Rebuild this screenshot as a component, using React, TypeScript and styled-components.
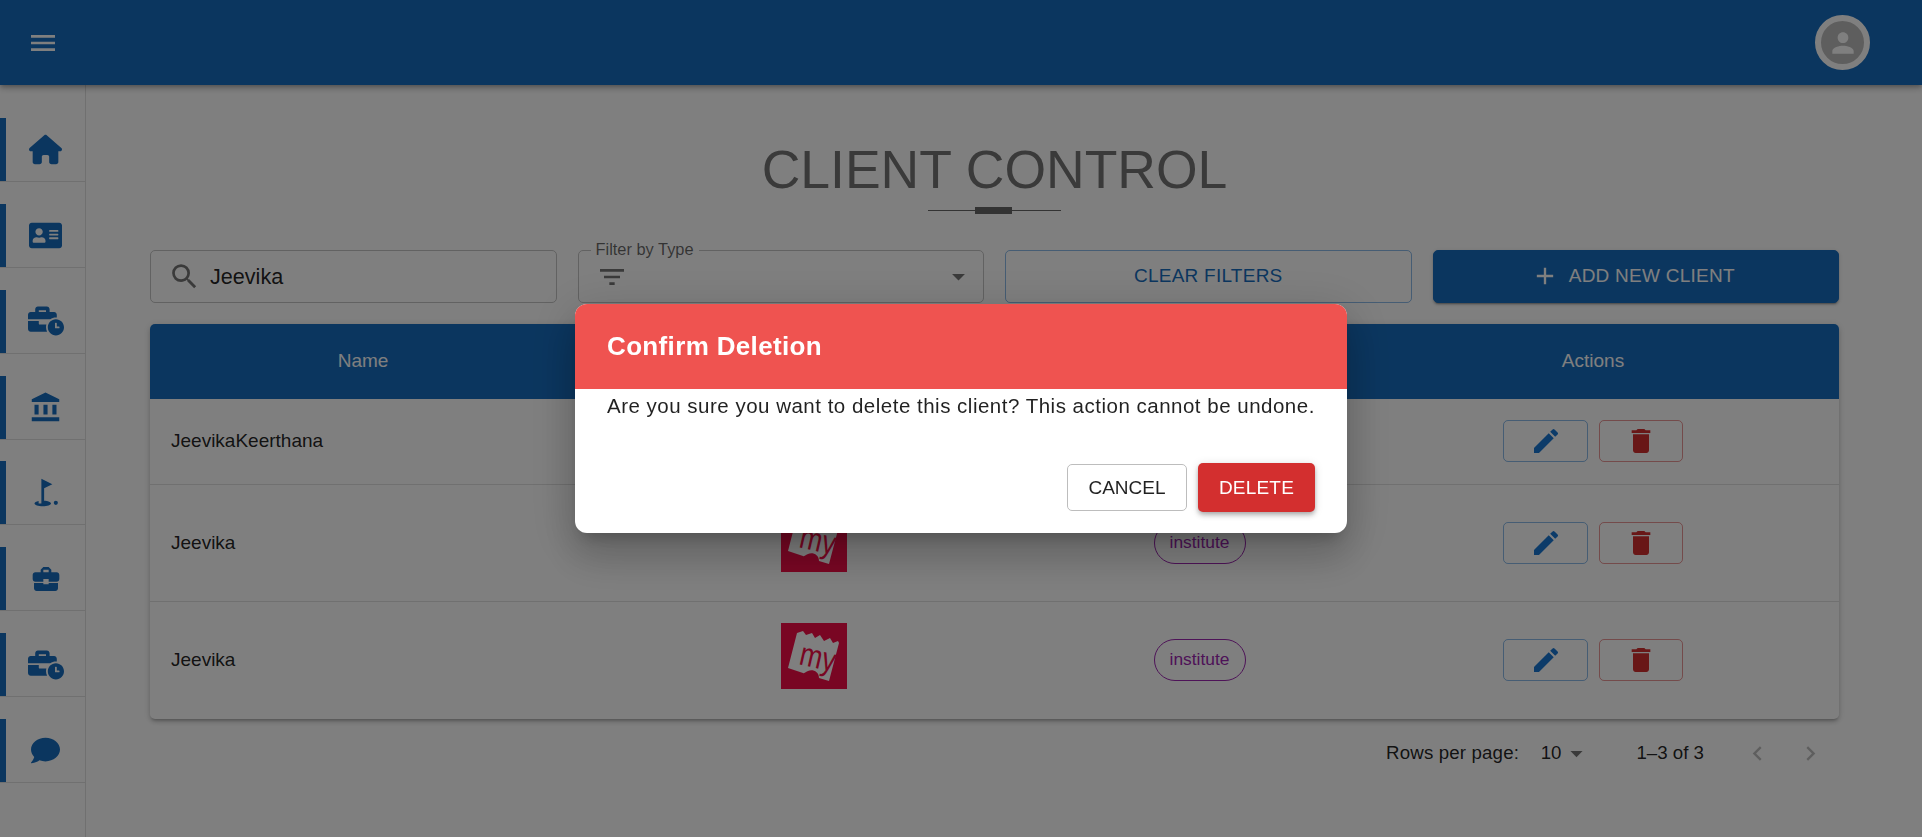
import styled, { createGlobalStyle } from "styled-components";
import { FaAddressCard, FaBusinessTime, FaComment } from "react-icons/fa";
import { FaHouse } from "react-icons/fa6";
import {
  MdAccountBalance,
  MdAdd,
  MdArrowDropDown,
  MdBusinessCenter,
  MdChevronLeft,
  MdChevronRight,
  MdDelete,
  MdEdit,
  MdFilterList,
  MdGolfCourse,
  MdMenu,
  MdPerson,
  MdSearch,
} from "react-icons/md";

const dark = "#176dbf";
const primary = "#1976d2";
const columns = "426px 476px 295px 1fr";

const GlobalStyle = createGlobalStyle`
  * {
    box-sizing: border-box;
  }
  html, body {
    margin: 0;
    height: 100%;
    overflow: hidden;
    background: #fff;
    font-family: "Liberation Sans", Arial, sans-serif;
  }
`;

const Page = styled.div`
  height: 837px;
  display: flex;
  flex-direction: column;
`;

const TopBar = styled.header`
  height: 85px;
  flex-shrink: 0;
  background: ${dark};
  color: #fff;
  display: flex;
  align-items: center;
  justify-content: space-between;
  padding: 0 52px 0 27px;
  box-shadow: 0 2px 4px -1px rgba(0, 0, 0, 0.2), 0 4px 5px rgba(0, 0, 0, 0.14),
    0 1px 10px rgba(0, 0, 0, 0.12);
  position: relative;
  z-index: 2;
`;

const Avatar = styled.div`
  width: 55px;
  height: 55px;
  border-radius: 50%;
  border: 6px solid #fff;
  background: #bdbdbd;
  display: flex;
  align-items: center;
  justify-content: center;
`;

const Body = styled.div`
  flex: 1;
  display: flex;
  min-height: 0;
`;

const Sidebar = styled.nav`
  width: 86px;
  flex-shrink: 0;
  border-right: 1px solid #e0e0e0;
  padding-top: 33px;
  display: flex;
  flex-direction: column;
  gap: 21.86px;
`;

const NavItem = styled.div`
  height: 64px;
  padding-left: 6px;
  border-bottom: 1px solid #e0e0e0;
  box-shadow: inset 6px 0 0 ${dark};
  color: ${dark};
  display: flex;
  align-items: center;
  justify-content: center;
`;

const Main = styled.main`
  flex: 1;
  min-width: 0;
  padding: 53px 83px 0 64px;
`;

const Title = styled.h1`
  margin: 0;
  text-align: center;
  font-size: 53.5px;
  line-height: 64px;
  font-weight: 400;
  color: #757575;
`;

const TitleRule = styled.div`
  width: 133px;
  height: 1px;
  margin: 8px auto 0;
  background: #666;
  position: relative;

  &::after {
    content: "";
    position: absolute;
    left: 47px;
    top: -3px;
    width: 37px;
    height: 7px;
    background: #666;
  }
`;

const Toolbar = styled.div`
  margin-top: 39px;
  display: grid;
  grid-template-columns: repeat(4, 1fr);
  gap: 21px;
`;

const Field = styled.div`
  height: 53px;
  border: 1px solid #c4c4c4;
  border-radius: 5px;
  display: flex;
  align-items: center;
  padding: 0 9px 0 17px;
  gap: 9px;
  color: rgba(0, 0, 0, 0.54);
  position: relative;
`;

const FieldValue = styled.span`
  font-size: 21.6px;
  color: rgba(0, 0, 0, 0.87);
`;

const FieldLabel = styled.span`
  position: absolute;
  left: 12px;
  top: -12px;
  padding: 0 5px;
  background: #fff;
  font-size: 16.4px;
  line-height: 20px;
  color: rgba(0, 0, 0, 0.6);
`;

const Spacer = styled.span`
  flex: 1;
`;

const ToolbarButton = styled.button<{ $filled?: boolean }>`
  height: 53px;
  border-radius: 5px;
  border: 1px solid ${(p) => (p.$filled ? dark : "rgba(25, 118, 210, 0.5)")};
  background: ${(p) => (p.$filled ? dark : "transparent")};
  color: ${(p) => (p.$filled ? "#fff" : dark)};
  box-shadow: ${(p) =>
    p.$filled
      ? "0 3px 1px -2px rgba(0,0,0,.2), 0 2px 2px rgba(0,0,0,.14), 0 1px 5px rgba(0,0,0,.12)"
      : "none"};
  font: 400 19px "Liberation Sans", Arial, sans-serif;
  letter-spacing: 0.25px;
  text-transform: uppercase;
  display: flex;
  align-items: center;
  justify-content: center;
  gap: 10px;
  padding: 0 ${(p) => (p.$filled ? "6px" : "0")} 1px 0;
`;

const TableCard = styled.div`
  margin-top: 21px;
  border-radius: 5px;
  overflow: hidden;
  box-shadow: 0 3px 3px -2px rgba(0, 0, 0, 0.2), 0 3px 4px rgba(0, 0, 0, 0.14),
    0 1px 8px rgba(0, 0, 0, 0.12);
`;

const HeadRow = styled.div`
  height: 75px;
  padding-bottom: 2px;
  background: ${dark};
  color: #fff;
  display: grid;
  grid-template-columns: ${columns};
  align-items: center;
  justify-items: center;
  font-size: 19px;
`;

const Row = styled.div`
  display: grid;
  grid-template-columns: ${columns};
  align-items: center;
  justify-items: center;
  padding: 21px 0 22px;
  border-bottom: 1px solid #e0e0e0;

  &:last-child {
    border-bottom: 0;
    padding-bottom: 23px;
  }
`;

const NameCell = styled.div`
  justify-self: start;
  padding-left: 21px;
  font-size: 19px;
  color: rgba(0, 0, 0, 0.87);
`;

const LogoCell = styled.div`
  height: 73px;
`;

const Chip = styled.span`
  height: 42px;
  width: 92px;
  border-radius: 21px;
  border: 1px solid #9c27b0;
  color: #9c27b0;
  font-size: 17.4px;
  display: flex;
  align-items: center;
  justify-content: center;
`;

const Actions = styled.div`
  display: flex;
  gap: 11px;
`;

const ActionButton = styled.button<{ $danger?: boolean }>`
  width: ${(p) => (p.$danger ? "84px" : "85px")};
  height: 42px;
  padding: 0;
  border-radius: 5px;
  background: transparent;
  border: 1px solid
    ${(p) => (p.$danger ? "rgba(211, 47, 47, 0.5)" : "rgba(25, 118, 210, 0.5)")};
  color: ${(p) => (p.$danger ? "#d32f2f" : primary)};
  display: flex;
  align-items: center;
  justify-content: center;
`;

const Pagination = styled.div`
  height: 68px;
  padding-right: 14px;
  display: flex;
  align-items: center;
  justify-content: flex-end;
  font-size: 18.7px;
  color: rgba(0, 0, 0, 0.87);
`;

const RowsLabel = styled.span`
  letter-spacing: 0.15px;
`;

const PageSize = styled.span`
  margin-left: 21.6px;
  display: flex;
  align-items: center;
  color: rgba(0, 0, 0, 0.87);

  svg {
    color: rgba(0, 0, 0, 0.54);
    margin-left: 1px;
  }
`;

const PageRange = styled.span`
  margin: 0 39px 0 45px;
`;

const PageArrows = styled.div`
  display: flex;
  gap: 24px;
  color: rgba(0, 0, 0, 0.26);
`;

const Overlay = styled.div`
  position: fixed;
  inset: 0;
  z-index: 10;
  background: rgba(0, 0, 0, 0.5);
  display: flex;
  align-items: center;
  justify-content: center;
`;

const Dialog = styled.div`
  width: 772px;
  height: 229px;
  background: #fff;
  border-radius: 12px;
  overflow: hidden;
  box-shadow: 0 11px 15px -7px rgba(0, 0, 0, 0.2),
    0 24px 38px 3px rgba(0, 0, 0, 0.14), 0 9px 46px 8px rgba(0, 0, 0, 0.12);
`;

const DialogHead = styled.h2`
  margin: 0;
  height: 85px;
  padding-left: 32px;
  background: #ef5350;
  color: #fff;
  font-size: 26px;
  font-weight: 700;
  letter-spacing: 0.35px;
  display: flex;
  align-items: center;
`;

const DialogText = styled.p`
  margin: 0;
  padding: 2px 32px 0;
  font-size: 20.5px;
  line-height: 29px;
  letter-spacing: 0.5px;
  color: rgba(0, 0, 0, 0.87);
  white-space: nowrap;
`;

const DialogActions = styled.div`
  margin-top: 43px;
  padding-right: 32px;
  display: flex;
  align-items: center;
  justify-content: flex-end;
  gap: 11px;
`;

const CancelButton = styled.button`
  width: 120px;
  height: 47px;
  padding: 0;
  border-radius: 5px;
  border: 1px solid #bdbdbd;
  background: #fff;
  color: rgba(0, 0, 0, 0.87);
  font: 400 19px "Liberation Sans", Arial, sans-serif;
`;

const DeleteButton = styled.button`
  width: 117px;
  height: 49px;
  padding: 0;
  border: 0;
  border-radius: 5px;
  background: #d32f2f;
  color: #fff;
  font: 400 19px "Liberation Sans", Arial, sans-serif;
  letter-spacing: 0.2px;
  box-shadow: 0 2px 4px -1px rgba(0, 0, 0, 0.2), 0 4px 5px rgba(0, 0, 0, 0.14),
    0 1px 10px rgba(0, 0, 0, 0.12);
`;

const TicketLogo = () => (
  <svg width="66" height="66" viewBox="0 0 66 66">
    <rect width="66" height="66" fill="#f20d47" />
    <path
      d="M16 10 L22 8 L25 12 L31 10 L34 15 L39 12 L43 18 L49 15 L52 20 L57 18 L58 20 L48 58 L38 55 C38 48 31 46 27 48 C24 49 23 51 22 50 L7 45 Z"
      fill="#fff"
    />
    <text
      x="17"
      y="41"
      fontFamily="'Liberation Sans', Arial, sans-serif"
      fontSize="33"
      fill="#f20d47"
      textLength="36"
      lengthAdjust="spacingAndGlyphs"
      transform="rotate(13 17 41)"
    >
      my
    </text>
  </svg>
);

const navIcons = [
  <FaHouse size={33} />,
  <FaAddressCard size={33} />,
  <FaBusinessTime size={36} />,
  <MdAccountBalance size={33} />,
  <MdGolfCourse size={33} />,
  <MdBusinessCenter size={32} />,
  <FaBusinessTime size={36} />,
  <FaComment size={29} />,
];

// the first row's logo and type sit behind the dialog, so they are left out
const clients = [
  { name: "JeevikaKeerthana", hidden: true },
  { name: "Jeevika", hidden: false },
  { name: "Jeevika", hidden: false },
];

export default function App() {
  return (
    <Page>
      <GlobalStyle />
      <TopBar>
        <MdMenu size={32} />
        <Avatar>
          <MdPerson size={32} />
        </Avatar>
      </TopBar>
      <Body>
        <Sidebar>
          {navIcons.map((icon, i) => (
            <NavItem key={i}>{icon}</NavItem>
          ))}
        </Sidebar>
        <Main>
          <Title>CLIENT CONTROL</Title>
          <TitleRule />
          <Toolbar>
            <Field>
              <MdSearch size={33} />
              <FieldValue>Jeevika</FieldValue>
            </Field>
            <Field>
              <FieldLabel>Filter by Type</FieldLabel>
              <MdFilterList size={32} />
              <Spacer />
              <MdArrowDropDown size={31} />
            </Field>
            <ToolbarButton>Clear Filters</ToolbarButton>
            <ToolbarButton $filled>
              <MdAdd size={28} />
              Add New Client
            </ToolbarButton>
          </Toolbar>
          <TableCard>
            <HeadRow>
              <span>Name</span>
              <span />
              <span />
              <span>Actions</span>
            </HeadRow>
            {clients.map((client, i) => (
              <Row key={i}>
                <NameCell>{client.name}</NameCell>
                {client.hidden ? (
                  <>
                    <span />
                    <span />
                  </>
                ) : (
                  <>
                    <LogoCell>
                      <TicketLogo />
                    </LogoCell>
                    <Chip>institute</Chip>
                  </>
                )}
                <Actions>
                  <ActionButton>
                    <MdEdit size={32} />
                  </ActionButton>
                  <ActionButton $danger>
                    <MdDelete size={32} />
                  </ActionButton>
                </Actions>
              </Row>
            ))}
          </TableCard>
          <Pagination>
            <RowsLabel>Rows per page:</RowsLabel>
            <PageSize>
              10
              <MdArrowDropDown size={29} />
            </PageSize>
            <PageRange>1–3 of 3</PageRange>
            <PageArrows>
              <MdChevronLeft size={29} />
              <MdChevronRight size={29} />
            </PageArrows>
          </Pagination>
        </Main>
      </Body>
      <Overlay>
        <Dialog>
          <DialogHead>Confirm Deletion</DialogHead>
          <DialogText>
            Are you sure you want to delete this client? This action cannot be
            undone.
          </DialogText>
          <DialogActions>
            <CancelButton>CANCEL</CancelButton>
            <DeleteButton>DELETE</DeleteButton>
          </DialogActions>
        </Dialog>
      </Overlay>
    </Page>
  );
}
